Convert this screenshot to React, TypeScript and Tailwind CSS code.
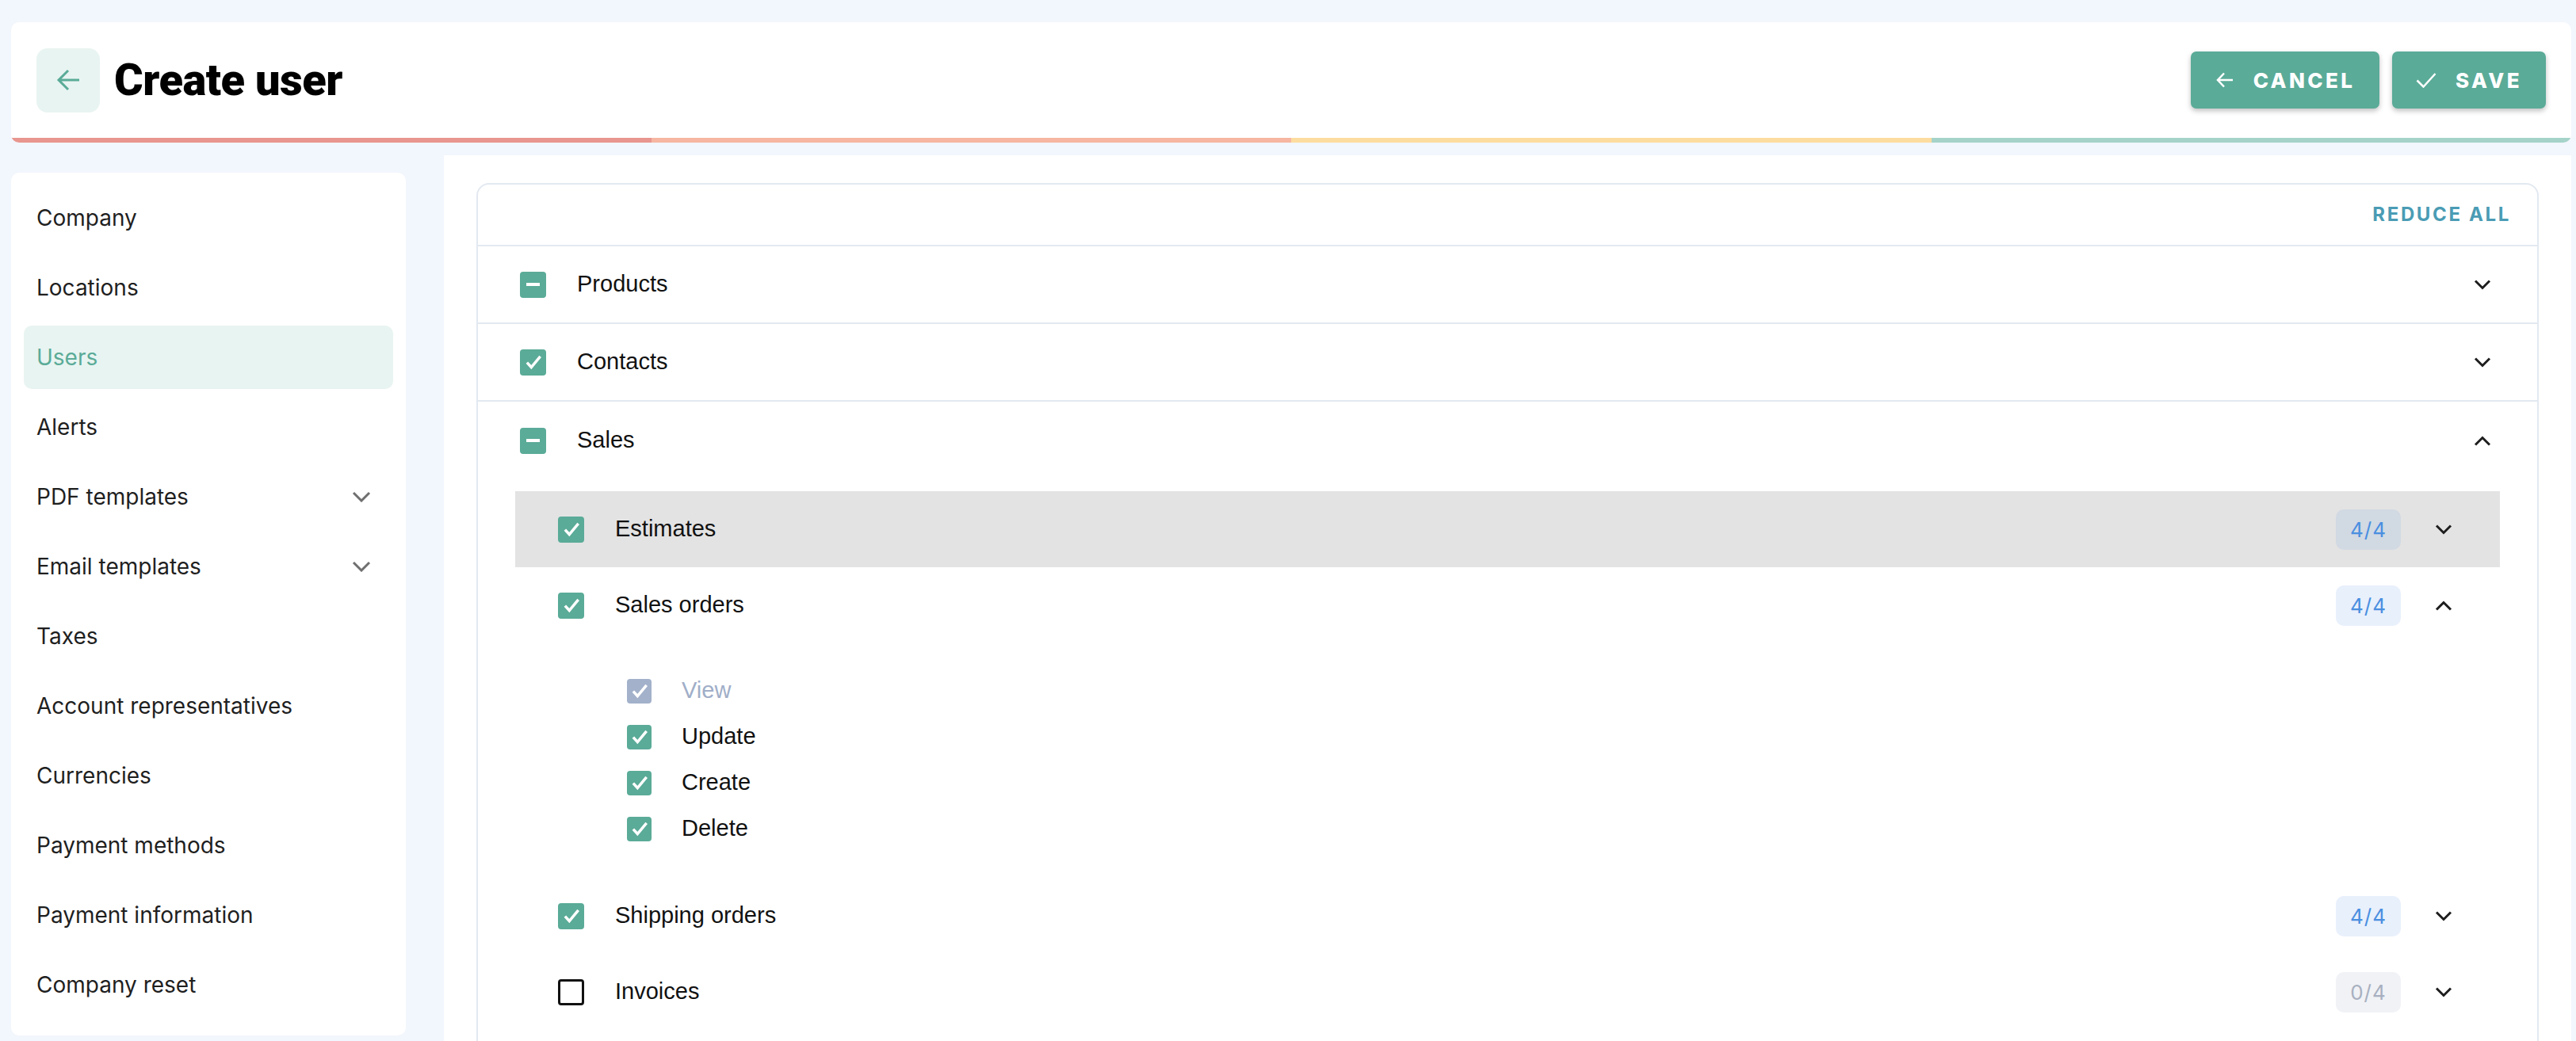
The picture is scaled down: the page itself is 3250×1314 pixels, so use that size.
type BoxState = 'on' | 'mixed' | 'off' | 'muted'

interface SubSection {
  id: string
  label: string
  state: BoxState
  count: string
  open: boolean
  hover?: boolean
}

const MENU = [
  { label: 'Company' },
  { label: 'Locations' },
  { label: 'Users', active: true },
  { label: 'Alerts' },
  { label: 'PDF templates', more: true },
  { label: 'Email templates', more: true },
  { label: 'Taxes' },
  { label: 'Account representatives' },
  { label: 'Currencies' },
  { label: 'Payment methods' },
  { label: 'Payment information' },
  { label: 'Company reset' },
]

const SALES: SubSection[] = [
  { id: 'estimates', label: 'Estimates', state: 'on', count: '4/4', open: false, hover: true },
  { id: 'sales-orders', label: 'Sales orders', state: 'on', count: '4/4', open: true },
  { id: 'shipping', label: 'Shipping orders', state: 'on', count: '4/4', open: false },
  { id: 'invoices', label: 'Invoices', state: 'off', count: '0/4', open: false },
]

const PERMISSIONS: { label: string; state: BoxState }[] = [
  { label: 'View', state: 'muted' },
  { label: 'Update', state: 'on' },
  { label: 'Create', state: 'on' },
  { label: 'Delete', state: 'on' },
]

function Checkbox({ state, small }: { state: BoxState; small?: boolean }) {
  const box = small ? 'w-[31px] h-[31px]' : 'w-[33px] h-[33px]'
  if (state === 'off') {
    return <span className={`${box} shrink-0 rounded-[4px] border-[3px] border-[#111]`} />
  }
  const bg = state === 'muted' ? 'bg-[#a3b1ca]' : 'bg-[#5aab98]'
  return (
    <span className={`${box} ${bg} shrink-0 rounded-[4px] flex items-center justify-center`}>
      {state === 'mixed' ? (
        <span className="w-[17px] h-[4px] bg-white" />
      ) : (
        <svg viewBox="0 0 24 24" className="w-[26px] h-[26px]" fill="none" stroke="white" strokeWidth="3.2">
          <path d="M4.5 12.5l5 5.5L20 5.5" />
        </svg>
      )}
    </span>
  )
}

function Chevron({ up, color = '#1e1e1e' }: { up?: boolean; color?: string }) {
  return (
    <svg viewBox="0 0 22 13" className="w-[22px] h-[13px] shrink-0" fill="none" stroke={color} strokeWidth="3">
      <path d={up ? 'M2 11.5l9-9 9 9' : 'M2 1.5l9 9 9-9'} />
    </svg>
  )
}

export default function App() {
  return (
    <div className="h-[1314px] overflow-hidden bg-[#f2f6fd] pl-[14px] pr-[6px] pt-[28px]">
      {/* header */}
      <header className="bg-white rounded-[10px] overflow-hidden">
        <div className="h-[146px] flex items-center justify-between pl-[32px] pr-[32px]">
          <div className="flex items-center gap-[18px]">
            <button className="w-[80px] h-[81px] rounded-[14px] bg-[#e8f4f1] flex items-center justify-center">
              <svg viewBox="0 0 30 28" className="w-[30px] h-[28px]" fill="none" stroke="#5aab98" strokeWidth="3">
                <path d="M29 14H3M15 2L3 14l12 12" />
              </svg>
            </button>
            <h1 className="font-[Roboto,sans-serif] font-black text-[56px] tracking-[-0.5px] text-black leading-none">
              Create user
            </h1>
          </div>
          <div className="flex items-center gap-[16px] font-[Inter,sans-serif]">
            <button className="h-[72px] w-[238px] rounded-[7px] bg-[#5aab98] shadow-[0_3px_6px_rgba(0,0,0,0.25)] flex items-center justify-center gap-[24px] text-white font-extrabold text-[26px] tracking-[0.13em]">
              <svg viewBox="0 0 24 24" className="w-[24px] h-[24px]" fill="none" stroke="white" strokeWidth="2.5">
                <path d="M22 12H3M11 3.5L3 12l8 8.5" />
              </svg>
              CANCEL
            </button>
            <button className="h-[72px] w-[194px] rounded-[7px] bg-[#5aab98] shadow-[0_3px_6px_rgba(0,0,0,0.25)] flex items-center justify-center gap-[24px] text-white font-extrabold text-[26px] tracking-[0.13em]">
              <svg viewBox="0 0 26 20" className="w-[26px] h-[20px]" fill="none" stroke="white" strokeWidth="2.5">
                <path d="M1.5 10.5l8 8L24.5 2" />
              </svg>
              SAVE
            </button>
          </div>
        </div>
        <div className="grid grid-cols-4 h-[6px]">
          <div className="bg-[#e8968f]" />
          <div className="bg-[#f6b6a1]" />
          <div className="bg-[#fddc9f]" />
          <div className="bg-[#a5d3c9]" />
        </div>
      </header>

      <div className="flex items-start gap-[48px] mt-[16px]">
        {/* sidebar */}
        <aside className="w-[498px] shrink-0 mt-[22px] bg-white rounded-[10px] px-[16px] pt-[17px] pb-[24px] flex flex-col gap-[8px] font-[Inter,sans-serif]">
          {MENU.map((item) => (
            <div
              key={item.label}
              className={`h-[80px] rounded-[10px] pl-[16px] pr-[28px] flex items-center justify-between text-[28px] ${
                item.active ? 'bg-[#e8f4f1] text-[#5aab98]' : 'text-[#1f1f1f]'
              }`}
            >
              <span>{item.label}</span>
              {item.more && (
                <svg viewBox="0 0 24 14" className="w-[24px] h-[14px]" fill="none" stroke="#6f6f6f" strokeWidth="3">
                  <path d="M2 2l10 10 10-10" />
                </svg>
              )}
            </div>
          ))}
        </aside>

        {/* content */}
        <main className="flex-1 bg-white px-[41px] pt-[35px] pb-[40px]">
          <div className="border-2 border-[#e3e9f1] rounded-[16px] font-['Liberation_Sans',Arial,sans-serif] text-[29px] text-[#111]">
            <div className="h-[78px] border-b-2 border-[#e3e9f1] flex items-center justify-end pr-[33px]">
              <span className="font-[Inter,sans-serif] font-bold text-[24px] tracking-[0.11em] text-[#4a9cb4]">
                REDUCE ALL
              </span>
            </div>

            <div className="h-[98px] border-b-2 border-[#e3e9f1] flex items-center pl-[53px] pr-[58px]">
              <Checkbox state="mixed" />
              <span className="ml-[39px] flex-1">Products</span>
              <Chevron />
            </div>
            <div className="h-[98px] border-b-2 border-[#e3e9f1] flex items-center pl-[53px] pr-[58px]">
              <Checkbox state="on" />
              <span className="ml-[39px] flex-1">Contacts</span>
              <Chevron />
            </div>
            <div className="h-[98px] flex items-center pl-[53px] pr-[58px]">
              <Checkbox state="mixed" />
              <span className="ml-[39px] flex-1">Sales</span>
              <Chevron up />
            </div>

            <div className="pt-[15px] px-[47px] pb-[60px]">
              {SALES.map((sub) => (
                <div key={sub.id}>
                  <div
                    className={`h-[96px] flex items-center pl-[54px] pr-[60px] ${sub.hover ? 'bg-[#e3e3e3]' : ''}`}
                  >
                    <Checkbox state={sub.state} />
                    <span className="ml-[39px] flex-1">{sub.label}</span>
                    <span
                      className={`w-[82px] h-[51px] rounded-[10px] flex items-center justify-center font-[Inter,sans-serif] text-[26px] tracking-[0.04em] ${
                        sub.hover
                          ? 'bg-[#d1d9e3] text-[#4a8fe0]'
                          : sub.count === '0/4'
                            ? 'bg-[#f0f2f6] text-[#a8b0c0]'
                            : 'bg-[#e8f0fc] text-[#4a8fe0]'
                      }`}
                    >
                      {sub.count}
                    </span>
                    <span className="ml-[43px] flex">
                      <Chevron up={sub.open} />
                    </span>
                  </div>
                  {sub.open && (
                    <div className="pt-[31px] pb-[33px] pl-[141px]">
                      {PERMISSIONS.map((p) => (
                        <div key={p.label} className="h-[58px] flex items-center">
                          <Checkbox state={p.state} small />
                          <span className={`ml-[38px] ${p.state === 'muted' ? 'text-[#a0aec8]' : ''}`}>{p.label}</span>
                        </div>
                      ))}
                    </div>
                  )}
                </div>
              ))}
            </div>
          </div>
        </main>
      </div>
    </div>
  )
}
